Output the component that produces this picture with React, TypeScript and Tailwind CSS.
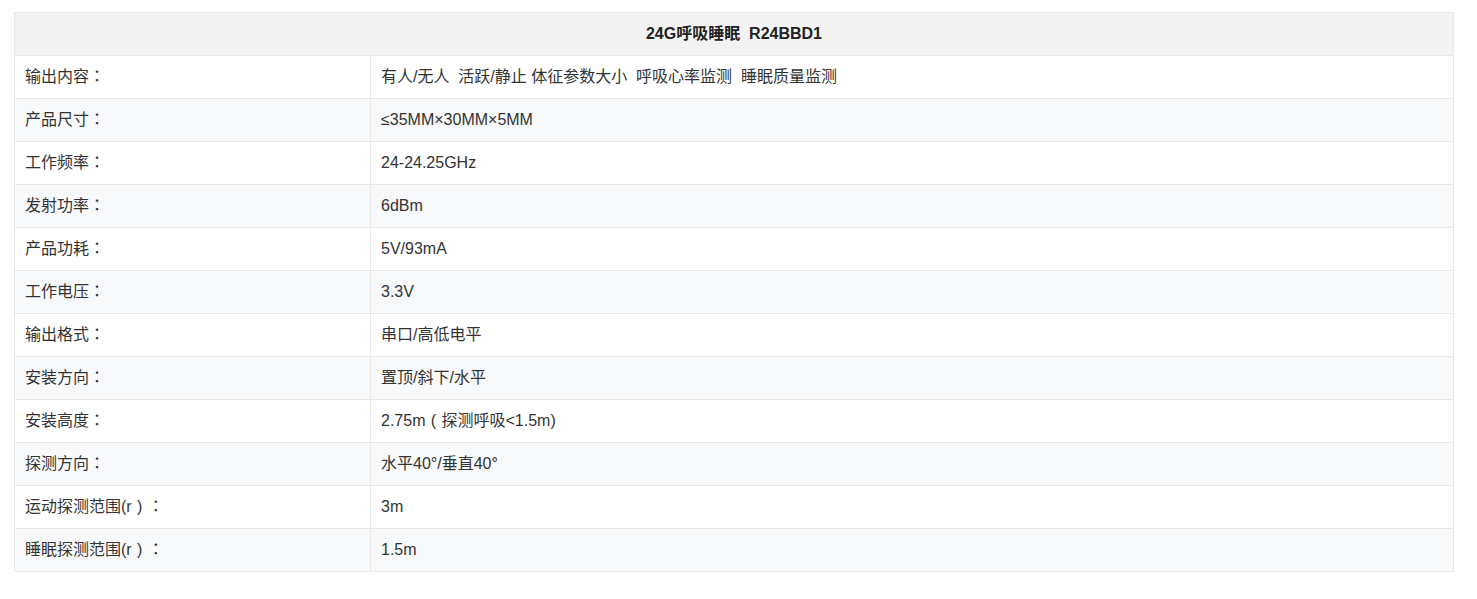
const TC = "font-['Liberation_Sans','Noto_Sans_CJK_TC',sans-serif]";

// full-width bracket drawn centred in a 1em box, as the reference's font does
const Wide = ({ ch }: { ch: string }) => <span className="inline-block w-[1em] text-center">{ch}</span>;

const ROWS: Array<[React.ReactNode, React.ReactNode]> = [
    ['输出内容', '有人/无人\u00a0 活跃/静止 体征参数大小\u00a0 呼吸心率监测\u00a0 睡眠质量监测'],
    ['产品尺寸', '≤35MM×30MM×5MM'],
    ['工作频率', '24-24.25GHz'],
    ['发射功率', '6dBm'],
    ['产品功耗', '5V/93mA'],
    ['工作电压', '3.3V'],
    ['输出格式', '串口/高低电平'],
    ['安装方向', '置顶/斜下/水平'],
    ['安装高度', <>2.75m<Wide ch="(" />探测呼吸&lt;1.5m)</>],
    ['探测方向', '水平40°/垂直40°'],
    [<>运动探测范围(r<Wide ch=")" /></>, '3m'],
    [<>睡眠探测范围(r<Wide ch=")" /></>, '1.5m'],
];

export default function App() {
    return (
        <div className="min-h-screen bg-white pt-3 pl-[14px] font-['Liberation_Sans','Noto_Sans_CJK_SC',sans-serif] text-base text-[#333]">
            <table className="w-[1440px] border-collapse border border-[#e8e8e8]">
                <tbody>
                    <tr className="h-[43px] bg-[#f3f3f3]">
                        <td colSpan={2} className="border border-[#e8e8e8] text-center font-bold text-[#222]">
                            24G呼吸睡眠&nbsp; R24BBD1
                        </td>
                    </tr>
                    {ROWS.map(([label, value], i) => (
                        <tr key={i} className={`h-[43px] ${i % 2 === 1 ? 'bg-[#f8f9fa]' : 'bg-white'}`}>
                            <td className="w-[356px] border border-[#e8e8e8] px-[10px]">
                                {label}
                                <span className={TC}>：</span>
                            </td>
                            <td className="border border-[#e8e8e8] px-[10px]">{value}</td>
                        </tr>
                    ))}
                </tbody>
            </table>
        </div>
    );
}
